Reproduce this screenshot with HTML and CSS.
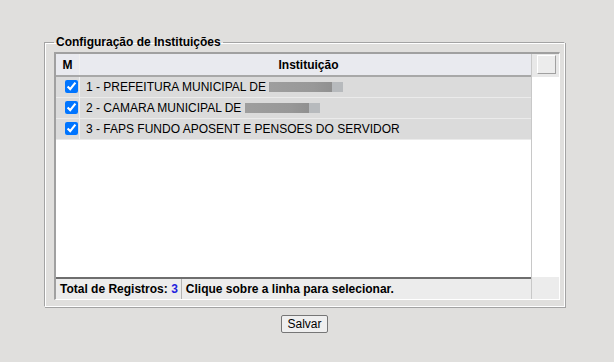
FILE: index.html
```html
<!DOCTYPE html>
<html lang="pt-BR">
<head>
    <meta charset="UTF-8">
    <title>Configuração de Instituições</title>
    <link rel="stylesheet" href="styles.css">
</head>
<body>
    <div class="page">
        <fieldset class="panel">
            <legend>Configuração de Instituições</legend>
            <div class="grid">
                <div class="main">
                    <div class="head">
                        <div class="col-m">M</div>
                        <div class="col-name">Instituição</div>
                    </div>
                    <div class="rows">
                        <div class="row">
                            <div class="col-m"><input type="checkbox" checked></div>
                            <div class="col-name">1 - PREFEITURA MUNICIPAL DE <span class="hidden w73"></span></div>
                        </div>
                        <div class="row">
                            <div class="col-m"><input type="checkbox" checked></div>
                            <div class="col-name">2 - CAMARA MUNICIPAL DE <span class="hidden w74"></span></div>
                        </div>
                        <div class="row">
                            <div class="col-m"><input type="checkbox" checked></div>
                            <div class="col-name">3 - FAPS FUNDO APOSENT E PENSOES DO SERVIDOR</div>
                        </div>
                    </div>
                    <div class="foot">
                        <span class="total">Total de Registros: <b class="count">3</b></span>
                        <span class="hint">Clique sobre a linha para selecionar.</span>
                    </div>
                </div>
                <div class="side">
                    <div class="side-top"><div class="corner"></div></div>
                    <div class="side-body"></div>
                    <div class="side-foot"></div>
                </div>
            </div>
        </fieldset>
        <div class="actions">
            <button type="button">Salvar</button>
        </div>
    </div>
</body>
</html>
```

FILE: styles.css
```css
body {
    margin: 0;
    background-color: #e0dfdd;
    font-family: 'Liberation Sans', Arial, sans-serif;
    font-size: 12px;
    color: #000;
}
.page {
    padding: 35px 0 0 44px;
    width: 521px;
}
.panel {
    margin: 0;
    padding: 3px 4px 6px 9px;
    border-color: #a3a3a3 #fff #fff #a3a3a3;
    border-style: solid;
    border-width: 1px;
    box-shadow: inset 1px 1px 0 #fff, 1px 1px 0 #a3a3a3;
}
.panel legend {
    padding: 0 2px;
    font-weight: bold;
    font-size: 12px;
    line-height: 14px;
}
.grid {
    display: flex;
    height: 245px;
    border-style: solid;
    border-width: 2px 1px 1px 2px;
    border-color: #a0a0a0 #fff #fff #a0a0a0;
    background-color: #fff;
}
.main {
    width: 475px;
    display: flex;
    flex-direction: column;
    border-right: 1px solid #c8c8c8;
}
.head {
    display: flex;
    height: 21px;
    line-height: 22px;
    background-color: #e9eaef;
    border-bottom: 2px solid #a8a8a8;
    font-weight: bold;
}
.head .col-m {
    text-align: center;
    padding-left: 0;
}
.head .col-name {
    flex: 1;
    text-align: center;
}
.col-m {
    width: 24px;
    flex: none;
    border-right: 1px solid #f0f0f0;
    box-sizing: border-box;
    padding-left: 9px;
}
.col-name {
    flex: 1;
    padding-left: 6px;
    white-space: nowrap;
}
.rows {
    flex: 1;
}
.row {
    display: flex;
    height: 20px;
    line-height: 20px;
    background-color: #dbdbdb;
    border-bottom: 1px solid #ebebeb;
}
.row input {
    margin: 0;
    width: 13px;
    height: 13px;
    vertical-align: -2px;
    accent-color: #0075ff;
}
.hidden {
    display: inline-block;
    height: 10px;
    vertical-align: -1px;
    background: linear-gradient(to right, #9e9e9e 0, #989898 60%, #909090 85%, #b7babd 85%);
}
.w73 {
    width: 74px;
}
.w74 {
    width: 75px;
}
.foot {
    display: flex;
    height: 20px;
    line-height: 21px;
    background-color: #ececec;
    border-top: 2px solid #6e6e6e;
    font-weight: bold;
}
.total {
    padding: 0 3px 0 4px;
    border-right: 1px solid #b4b4b4;
}
.count {
    color: #2222dd;
}
.hint {
    padding-left: 4px;
}
.side {
    flex: 1;
    display: flex;
    flex-direction: column;
}
.side-top {
    height: 23px;
    background-color: #e8e8e8;
    padding: 1px 0 0 5px;
    box-sizing: border-box;
}
.corner {
    width: 17px;
    height: 17px;
    background-color: #ececec;
    border-style: solid;
    border-width: 1px;
    border-color: #fff #a0a0a0 #a0a0a0 #fff;
}
.side-body {
    flex: 1;
}
.side-foot {
    height: 22px;
    background-color: #ececec;
    border-top: 1px solid #fff;
}
.actions {
    text-align: center;
    padding-top: 8px;
}
.actions button {
    font-family: 'Liberation Sans', Arial, sans-serif;
    font-size: 12px;
    height: 18px;
    line-height: 14px;
    padding: 0 5px;
    background-color: #efefef;
    border: 1px solid #767676;
    border-radius: 2px;
    color: #000;
}
```
